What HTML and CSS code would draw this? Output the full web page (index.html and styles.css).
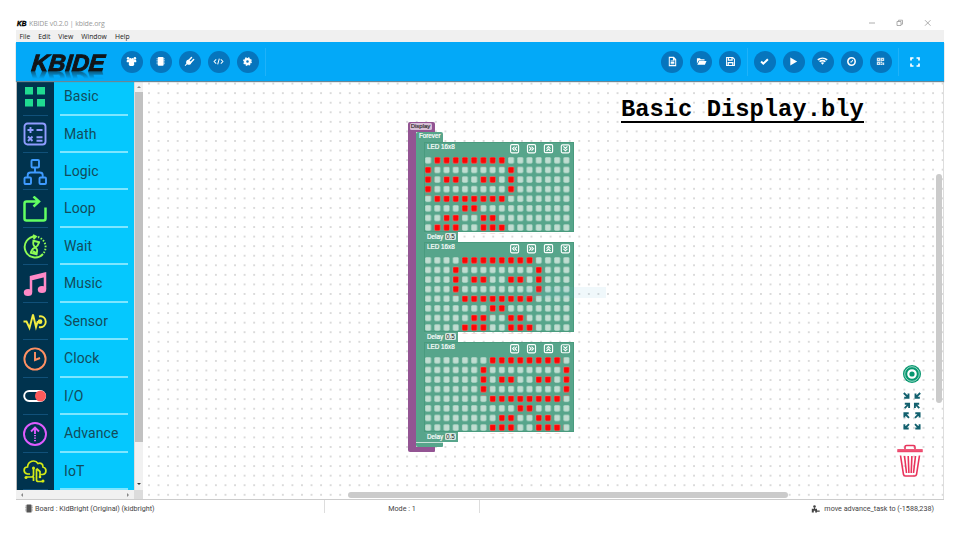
FILE: index.html
```html
<!DOCTYPE html>
<html lang="en">
<head>
<meta charset="utf-8">
<title>KBIDE v0.2.0 | kbide.org</title>
<link rel="stylesheet" href="styles.css">
</head>
<body>
<svg width="0" height="0" class="defs">
  <defs>
    <pattern id="led-off" width="9.22" height="9.6" patternUnits="userSpaceOnUse">
      <rect x="0.2" y="0.2" width="5.8" height="6.2" rx="1.3" fill="#c0ddd1"/>
    </pattern>
    <pattern id="led-on" width="9.22" height="9.6" patternUnits="userSpaceOnUse">
      <rect x="0.2" y="0.2" width="5.8" height="6.2" rx="1.1" fill="#ff0505"/>
    </pattern>
    <path id="face" fill="url(#led-on)" d="M9.22 0h73.76v9.6H9.22zM0 9.6h9.22v28.8H0zM82.98 9.6h9.22v28.8h-9.22zM18.44 19.2h18.44v9.6H18.44zM55.32 19.2h18.44v9.6H55.32zM9.22 38.4h73.76v9.6H9.22zM36.88 48h18.44v9.6H36.88zM18.44 57.6h18.44v9.6H18.44zM55.32 57.6h18.44v9.6H55.32zM9.22 67.2h27.66v9.6H9.22zM55.32 67.2h27.66v9.6H55.32z"/>
    <g id="arrows" fill="none" stroke="#fff" stroke-width="1.15">
      <rect x=".6" y=".6" width="8" height="8.2" rx="1.2"/><path d="M4.6 2.7 2.6 4.7l2 2M7 2.7 5 4.7l2 2"/>
    </g>
    <g id="shifts">
      <use href="#arrows"/>
      <use href="#arrows" transform="matrix(-1 0 0 1 26.1 0)"/>
      <use href="#arrows" transform="translate(43.2) rotate(90)"/>
      <use href="#arrows" transform="translate(50.7 9.4) rotate(-90)"/>
    </g>
  </defs>
</svg>
<div class="window">
  <div class="titlebar">
    <span class="mini-logo">KB</span><span class="caption">KBIDE v0.2.0 | kbide.org</span>
    <svg class="winctl" width="64" height="10" viewBox="0 0 64 10" fill="none" stroke="#999" stroke-width=".8"><path d="M1 5h6M57 2.2l5.5 5.5M62.500 2.200 57 7.700"/><path d="M29 3.500h4v4h-4zM30.500 3.500v-1.300h4v4H33"/></svg>
  </div>
  <nav class="menubar"><span>File</span><span>Edit</span><span>View</span><span>Window</span><span>Help</span></nav>
  <header class="toolbar">
    <svg class="logo" width="82" height="30" viewBox="0 0 82 30">
      <g transform="translate(4 22) skewX(-6)" font-family="Liberation Sans" font-weight="700" font-style="italic" font-size="23.500">
        <text fill="#121518" stroke="#121518" stroke-width="1" textLength="73" lengthAdjust="spacingAndGlyphs">KBIDE</text>
      </g>
    </svg>
    <div class="tools left">
      <span class="btn"><svg viewBox="0 0 12 12"><path d="M3.700 4.500a1.300 1.300 0 1 1 2.300-.9 1.300 1.300 0 1 1 2.300.9h.3L9 9.500 7.800 11H4.200L3 9.500l.4-5z"/><circle cx="2.300" cy="2.400" r="1.400"/><circle cx="9.700" cy="2.400" r="1.400"/><path d="M.7 6.300c0-3 2-2.500 3.300-2v2.500H1zM11.300 6.300c0-3-2-2.500-3.300-2v2.500h3z"/></svg></span>
      <span class="btn"><svg viewBox="0 0 12 12"><rect x="3" y="1.200" width="6.400" height="9.400" rx="1"/><path d="M2.300 2.500v7.200M10 2.500v7.200" stroke="#fff" stroke-width=".9" stroke-dasharray="1 .8"/></svg></span>
      <span class="btn"><svg viewBox="0 0 12 12"><path d="M3.800 4 8 8.200C6.800 9.800 4.800 10 3.400 9L1.500 11l-.8-.7 1.900-2C1.900 6.700 2.500 5 3.800 4z"/><path d="m5.400 4.600 2.800-2.900M7.600 6.800l2.900-2.900" stroke="#fff" stroke-width="1.600" stroke-linecap="round"/><path d="m5 3.800 3.300 3.300L7 8.400 3.700 5z"/></svg></span>
      <span class="btn"><svg viewBox="0 0 12 12" class="line"><path d="M3.500 3.700 1.200 6l2.300 2.300M8.500 3.700 10.800 6 8.500 8.300M6.900 2.800 5.100 9.200"/></svg></span>
      <span class="btn"><svg viewBox="0 0 12 12"><circle cx="6" cy="6" r="2.600" fill="none" stroke="#fff" stroke-width="2.400"/><circle cx="6" cy="6" r="4" fill="none" stroke="#fff" stroke-width="1.600" stroke-dasharray="1.700 1.442"/></svg></span>
    </div>
    <i class="rule"></i>
    <div class="tools files">
      <span class="btn"><svg viewBox="0 0 12 12" class="line"><path d="M2.500 1.500h4.800l2.200 2.200v6.800h-7zM7 1.500V4h2.500M4 5.500h4M4 7h4M4 8.500h4"/></svg></span>
      <span class="btn"><svg viewBox="0 0 12 12"><path d="M1 8.500v-6h3.300l1 1h4v1.300H3zM3.500 5.400h8L9.700 9.500H1.400z"/></svg></span>
      <span class="btn"><svg viewBox="0 0 12 12" class="line"><path d="M1.700 1.700h6.800l1.800 1.800v6.800H1.700z"/><path d="M3.700 2v2.500h4V2M3.500 10V7.200h5V10" stroke-width="1.400"/></svg></span>
    </div>
    <i class="rule"></i>
    <div class="tools run">
      <span class="btn"><svg viewBox="0 0 12 12" class="line"><path d="m2.300 6.100 2.400 2.300 5-4.800" stroke-width="2.200"/></svg></span>
      <span class="btn"><svg viewBox="0 0 12 12"><path d="M2.500 1.700 10 6l-7.500 4.300z"/></svg></span>
      <span class="btn"><svg viewBox="0 0 12 12" class="line"><path d="M.9 4.300c3-2.500 7.200-2.500 10.200 0M2.800 6.200c2-1.500 4.400-1.500 6.400 0" stroke-width="1.800"/><path d="M4.100 7.400q1.900-1.300 3.800 0L6 9.500z" fill="#fff" stroke="none"/></svg></span>
      <span class="btn"><svg viewBox="0 0 12 12" class="line"><circle cx="6" cy="6" r="4" stroke-width="1.700"/><path d="M6 6.500H4.700M6 6.500l1.400-2.100"/></svg></span>
      <span class="btn"><svg viewBox="0 0 12 12" opacity=".82"><path d="M2 1.800h3.700v3.700H2zM6.100 1.800H10v3.700H6.100zM2 5.900h3.700v3.900H2zM6.100 5.900h1.700v1.700H6.100zM8.100 7H10v2.800H8.100zM6.100 8.200h1.600v1.600H6.100z"/><path d="M3.400 3.200h.9v1h-.9zM7.700 3.200h.9v1h-.9zM3.400 7.500h.9v1h-.9z" fill="#0675bd"/></svg></span>
    </div>
    <i class="rule"></i>
    <svg class="full" viewBox="0 0 12 12" width="12" height="12" fill="none" stroke="#fff" stroke-width="1.700"><path d="M2 4.500V2h2.500M7.500 2H10v2.500M10 7.500V10H7.500M4.500 10H2V7.500"/></svg>
  </header>
  <main class="main">
    <aside class="sidebar">
      <div class="side-body">
        <ul class="categories">
          <li><span class="ico"><svg viewBox="0 0 24 24"><path d="M2 2h8v7.500H2zM14 2h8v7.500h-8zM2 14h8v7.500H2zM14 14h8v7.500h-8z"/></svg></span><span class="name">Basic</span></li>
          <li><span class="ico"><svg viewBox="0 0 24 24" stroke="#8f9cff"><rect x="1.500" y="1.500" width="21" height="21" rx="3"/><path d="M4.500 8h6M7.500 5v6M13.500 8h6M5 14.500l4.500 4.500M9.500 14.500 5 19M13.500 15.200h6M13.500 18.700h6"/></svg></span><span class="name">Math</span></li>
          <li><span class="ico"><svg viewBox="0 0 24 26" stroke="#3e9bff"><rect x="8.500" y="1" width="7.500" height="7.500" rx="1"/><rect x="1.500" y="18.500" width="6.500" height="6.500" rx="1"/><rect x="16.500" y="18.500" width="6.500" height="6.500" rx="1"/><path d="M12 8.500v5M4.700 18v-2q0-2.500 3-2.500h9q3 0 3 2.500V18"/></svg></span><span class="name">Logic</span></li>
          <li><span class="ico"><svg class="bold" viewBox="0 0 24 26" stroke="#62ff62"><path d="M15 5.500H3.500Q1.500 5.500 1.500 7.500v15q0 2 2 2h17q2 0 2-2V11.500M10.500.5l5.500 5-5.500 5"/></svg></span><span class="name">Loop</span></li>
          <li><span class="ico"><svg viewBox="0 0 24 24" stroke="#8efc55"><path d="M13 1.500A10.500 10.500 0 1 0 20 19M10 0l3 1.500L10.500 4"/><path d="M15 2a10.500 10.500 0 0 1 5 17" stroke-dasharray="1.500 1.500"/><path d="m9.500 5.500 7.500 2M7 17.500l7.500 2M10.500 6c-1 4 0 4 2 6.500-2.500.5-3.500 1.500-4.500 5M16 7.500c-1 3.500-1.500 4-3.500 5 2 2 2 3 1 6.500M10 16l4 2.500"/></svg></span><span class="name">Wait</span></li>
          <li><span class="ico"><svg class="bold" viewBox="0 0 24 24" stroke="#ff8ac7"><path d="M8 20V5l14-3.500V17M8 7.200l14-3.500"/><g fill="#ff8ac7"><ellipse cx="5" cy="20.500" rx="3" ry="2.300"/><ellipse cx="19" cy="17.500" rx="3" ry="2.300"/></g></svg></span><span class="name">Music</span></li>
          <li><span class="ico"><svg viewBox="0 0 24 24" stroke="#f3ed42"><path d="M.5 11.500h3l3 6.500L10 4.500l3 12.500 1.500-5h3"/><path d="M16 6.500c9-2 9 12.500 0 10.500"/><circle cx="17" cy="11.700" r="2.400" fill="#f3ed42" stroke="none"/></svg></span><span class="name">Sensor</span></li>
          <li><span class="ico"><svg viewBox="0 0 24 24" stroke="#ff9163"><circle cx="12" cy="12" r="10.600"/><path d="M12 5v8l5-2"/></svg></span><span class="name">Clock</span></li>
          <li><span class="ico"><svg viewBox="0 0 24 24" stroke="#fff"><rect x="1.200" y="7" width="21" height="10" rx="5"/><circle cx="17.500" cy="12" r="5.500" fill="#ff5b5b" stroke="none"/></svg></span><span class="name">I/O</span></li>
          <li><span class="ico"><svg viewBox="0 0 24 24" stroke="#df5cff"><circle cx="12" cy="12" r="11"/><path d="m8 9.500 4-4 4 4M12 6v6"/><path d="M12 13v7" stroke-dasharray="1.300 1.200"/></svg></span><span class="name">Advance</span></li>
          <li><span class="ico"><svg viewBox="0 0 24 24" stroke="#d4eb16"><path d="M7 15H4.500C0 14 0 8 4.500 8 5 2 12 0 15 4.500c3-1 5 .5 5 3.500 4 1 4 7-.5 7.500H17M10.500 9v7q0 2-2 2H3M10.500 18v4M13.500 10v11q0 1.500 2 1.500H20M17 12v6M13.500 9.500l3.500 3" stroke-width="1.700"/><g fill="#d4eb16" stroke="none"><circle cx="3" cy="18.500" r="1.500"/><circle cx="20" cy="22" r="1.500"/><circle cx="10.500" cy="9" r="1.500"/><circle cx="17" cy="18" r="1.300"/></g></svg></span><span class="name">IoT</span></li>
        </ul>
        <div class="vbar"><i class="up"></i><b></b><i class="down"></i></div>
      </div>
      <div class="hbar"><i class="prev"></i><i class="next"></i><b></b></div>
    </aside>
    <section class="workspace">
      <h1 class="filename">Basic Display.bly</h1>
      <div class="block purple">
        <div class="head"><span>Display</span></div>
        <div class="body">
          <div class="block green">
            <div class="head">Forever</div>
            <div class="body">
              <div class="led"><div class="led-top">LED 16x8<svg width="60" height="10"><use href="#shifts"/></svg></div><svg class="matrix" width="147" height="77"><rect width="147" height="77" fill="url(#led-off)"/><use href="#face"/></svg></div>
              <div class="delay">Delay <span>0.5</span></div>
              <div class="led"><div class="led-top">LED 16x8<svg width="60" height="10"><use href="#shifts"/></svg></div><svg class="matrix" width="147" height="77"><rect width="147" height="77" fill="url(#led-off)"/><use href="#face" x="27.660"/></svg></div>
              <div class="delay">Delay <span>0.5</span></div>
              <div class="led"><div class="led-top">LED 16x8<svg width="60" height="10"><use href="#shifts"/></svg></div><svg class="matrix" width="147" height="77"><rect width="147" height="77" fill="url(#led-off)"/><use href="#face" x="55.320"/></svg></div>
              <div class="delay last">Delay <span>0.5</span></div>
            </div>
            <div class="foot"></div>
          </div>
        </div>
        <div class="foot"></div>
      </div>
      <div class="ghost"></div>
      <i class="scroll-y"></i><i class="scroll-x"></i>
      <div class="controls">
        <svg width="20" height="20" viewBox="0 0 20 20"><circle cx="10" cy="10" r="9" fill="#07976f"/><circle cx="10" cy="10" r="7.300" fill="none" stroke="#d5f3ea" stroke-width=".7"/><circle cx="10" cy="10" r="3.700" fill="none" stroke="#fff" stroke-width="2.200"/></svg>
        <svg class="zooms" width="18" height="38" viewBox="0 0 18 38" fill="none" stroke="#12606e" stroke-width="1.900"><path d="M.8 1 5 5.200M1.200 5.700h4.300V1.400M17.200 1 13 5.200M16.800 5.700h-4.300V1.400M1.700 16.100 5.900 11.900M1.800 11.800h4.300v4.300M16.300 16.100 12.100 11.900M16.200 16.100V16M16.200 11.800h-4.300v4.300"/><path d="M1.700 21.500 6 25.800M5.700 21.200H1.400v4.300M16.500 21.300 12 25.800M12.300 21.200h4.300v4.300M1.700 36.500 6 32.200M5.700 36.500H1.400v-4.300M16.300 36.500 12 32.200M12.300 36.500h4.300v-4.300"/></svg>
        <svg class="trash" width="26" height="34" viewBox="0 0 26 34" fill="none" stroke="#e9345c" stroke-width="1.600"><path d="M8 5V3q0-1.500 1.500-1.500h7Q18 1.500 18 3v2"/><path d="M.3 6.700h25.400" stroke-width="3"/><path d="M.5 6.900h25" stroke="#ff9aaf" stroke-width=".5"/><path d="m3.500 11.500 3 19q.3 1.500 2 1.500h9q1.700 0 2-1.500l3-19M7.500 12l2 17M11.200 12l.7 17M14.900 12l-.7 17M18.500 12l-2 17"/></svg>
      </div>
    </section>
  </main>
  <footer class="status">
    <div class="board"><svg width="8" height="9" viewBox="0 0 8 9" fill="#555"><rect x="1.500" y=".5" width="5" height="8" rx=".6"/><path d="M1 1.500v6M7 1.500v6" stroke="#777" stroke-dasharray="1 .6"/></svg>Board : KidBright (Original) (kidbright)</div>
    <div class="mode">Mode : 1</div>
    <div class="event"><svg width="9" height="8" viewBox="0 0 9 8" fill="#444"><circle cx="3.500" cy="1.500" r="1.300"/><path d="M3 2.500h1v1.300h2V7.500H4.200V5.800H2.800v1.700H.8V3.800H3zM6 5.500h2.700v1.200H6z"/></svg>move advance_task to (-1588,238)</div>
  </footer>
</div>
</body>
</html>
```
FILE: styles.css
```css
* { box-sizing: border-box; }
body { margin: 0; background: #fff; font-family: Roboto, sans-serif; overflow: hidden; }
.defs { position: absolute; }
.window { width: 928px; margin: 16px 0 0 16px; }

.titlebar { height: 14px; display: flex; align-items: center; font: 7px "Open Sans", sans-serif; color: #999; padding-left: 1px; }
.mini-logo { font: italic 900 6.5px "Liberation Sans", sans-serif; color: #000; width: 12px; -webkit-text-stroke: .4px #000; }
.caption { letter-spacing: -.13px; }
.winctl { margin-left: auto; margin-right: 12px; }
.menubar { height: 12px; background: #f0f0f0; display: flex; gap: 8px; padding-left: 3.500px; font: 6.800px/13px "Open Sans", sans-serif; color: #222; }

.toolbar { position: relative; z-index: 2; height: 39px; background: #03a9f8; display: flex; align-items: center; box-shadow: 0 1px 1px #6a8796; }
.logo { align-self: flex-start; margin: 7px 0 0 11px; overflow: visible; -webkit-box-reflect: below -15.300px linear-gradient(transparent 50%, rgba(0, 0, 0, .5) 73%); }
.tools { display: flex; gap: 7px; }
.left { margin-left: 11.500px; }
.btn { width: 22px; height: 22px; border-radius: 50%; background: #0675bd; display: grid; place-items: center; }
.btn svg { width: 11px; height: 11px; fill: #fff; }
.btn svg.line { fill: none; stroke: #fff; stroke-width: 1.1; }
.rule { width: 1px; height: 28px; background: #1fb2f9; }
.left + .rule { margin-left: 6px; }
.files { margin-left: auto; margin-right: 6px; }
.run { margin: 0 6px 0 5.500px; }
.full { margin: 0 23px 0 10.500px; }

.main { display: flex; height: 419px; border-bottom: 1px solid #ccc; }
.sidebar { width: 127px; flex: none; }
.side-body { height: 409px; display: flex; overflow: hidden; }
.categories { margin: 0; padding: 0; list-style: none; width: 117.500px; background: linear-gradient(90deg, #bbb 0 1px, #00334e 1px 38px, #05c8fe 38px); }
.categories li { height: 37.450px; display: flex; }
.categories li:first-child { height: 34.600px; }
.ico { width: 25px; margin-left: 6.500px; border-bottom: 1px solid #11517a; display: grid; place-items: center; }
.ico svg { width: 24px; height: 26px; fill: none; stroke-width: 1.900; margin-top: 1px; }
.ico svg.bold { stroke-width: 2.500; }
.name { width: 68px; margin-left: 12.500px; padding-left: 4px; border-bottom: 2px solid #7de6ff; font-size: 14px; line-height: 37.500px; letter-spacing: .1px; color: #124c5c; }
li:first-child .name { line-height: 30px; }
.categories li:first-child svg { fill: #20db91; margin-top: -2px; }
.vbar { width: 9.500px; background: #f1f1f1; display: flex; flex-direction: column; align-items: center; border-left: 1px solid #ddd; }
.vbar b { width: 7.500px; height: 350px; background: #c1c1c1; }
.vbar i { width: 0; height: 0; border: 2px solid transparent; }
.vbar .up { border-bottom-color: #888; margin: 3px 0 4px; }
.vbar .down { border-top-color: #333; margin: auto 0 3px; }
.hbar { height: 9px; background: #f1f1f1; display: flex; align-items: center; padding-left: 3px; }
.hbar i { border: 2px solid transparent; }
.hbar .prev { border-right-color: #888; }
.hbar .next { border-left-color: #888; margin-left: auto; margin-right: 3px; }
.hbar b { width: 9px; height: 9px; background: #dcdcdc; }

.workspace { position: relative; flex: 1; border-right: 1px solid #ddd; background: radial-gradient(circle, #dadada 0 .7px, transparent 1.100px) 1.200px -2.200px / 9.570px 9.570px; }
.filename { position: absolute; left: 478px; top: 13px; margin: 0; width: 243px; height: 29px; border-bottom: 2px solid #000; font: 700 23.800px/31px "Liberation Mono", monospace; white-space: nowrap; color: #000; }

.block { --c: #935493; font: 6.300px/8px "Liberation Sans", sans-serif; color: #fff; -webkit-text-stroke: .2px; }
.purple { position: absolute; left: 264.700px; top: 40.600px; }
.green { --c: #57a58b; }
.head { width: 27px; height: 10px; background: var(--c); border-radius: 2px 2px 0 0; padding-left: 3px; }
.purple > .head { padding: 1px 0 0 2px; }
.head span { display: block; width: 22px; height: 7.500px; line-height: 7.500px; padding-left: 1px; background: #d8bfd8; color: #333; border-radius: 1.500px; font-size: 6px; }
.body { padding-left: 8.200px; background: linear-gradient(var(--c), var(--c)) 0 0 / 8.300px 100% no-repeat; }
.foot { width: 27px; height: 5px; background: var(--c); border-radius: 0 0 1px 2px; }
.green > .foot { border-top: 1px solid #cbe3da; }
.led { width: 150px; height: 90px; background: #57a58b; border: 1px solid #499b7e; }
.led-top { height: 14.200px; display: flex; justify-content: space-between; padding-left: 2px; line-height: 8px; }
.led-top svg { width: 62px; margin: 1px 1.200px 0 0; overflow: visible; }
.matrix { display: block; margin-left: -.2px; }
.delay { width: 33.500px; height: 10.200px; background: #57a58b; padding-left: 3px; line-height: 9px; white-space: nowrap; }
.delay span { display: inline-block; height: 7px; line-height: 7px; background: #d5e8e1; color: #222; border-radius: 1.500px; padding: 0 1px; -webkit-text-stroke: 0; }

.ghost { position: absolute; left: 381px; top: 206px; width: 82px; height: 11px; background: rgba(110, 190, 220, .1); }
.scroll-y { position: absolute; right: 1.500px; top: 93px; width: 6px; height: 229px; border-radius: 3px; background: #cbcbcb; }
.scroll-x { position: absolute; left: 205px; bottom: 1px; width: 440px; height: 6px; border-radius: 3px; background: #cbcbcb; }
.controls { position: absolute; left: 753px; top: 283px; width: 28px; display: flex; flex-direction: column; align-items: center; }
.controls > svg { margin-left: 4px; }
.controls .zooms { margin-top: 8px; }
.controls .trash { margin: 14px 0 0; }

.status { height: 16px; display: grid; grid-template-columns: 309px 155px 1fr; font-size: 7.200px; line-height: 17px; color: #444; }
.status > div { white-space: nowrap; }
.board, .mode { height: 13px; border-right: 1px solid #ddd; }
.board { padding-left: 9px; }
.mode { text-align: center; }
.event { text-align: right; padding-right: 10px; }
.status svg { vertical-align: -2px; margin-right: 2px; }
.event svg { margin-right: 4px; }
```
